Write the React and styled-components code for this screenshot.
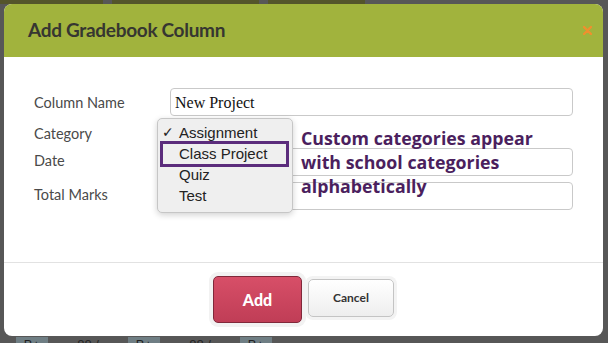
import React from "react";
import styled, { createGlobalStyle } from "styled-components";

const GlobalStyle = createGlobalStyle`
  html, body {
    margin: 0;
    padding: 0;
    background: #575757;
  }
  body {
    font-family: "Lato", "Liberation Sans", sans-serif;
  }
`;

const Page = styled.div`
  width: 608px;
  height: 343px;
  overflow: hidden;
  background: #575757;
  display: flex;
  flex-direction: column;
`;

const TopStrip = styled.div`
  height: 4px;
  display: flex;
  gap: 9px;
  flex-shrink: 0;
`;

const TopBar = styled.div`
  width: ${(p) => p.w}px;
  background: #54552b;
`;

const Modal = styled.div`
  width: 599px;
  height: 332px;
  margin-left: 4px;
  flex-shrink: 0;
  background: #fff;
  border-radius: 8px;
  overflow: hidden;
  display: flex;
  flex-direction: column;
`;

const Header = styled.div`
  height: 53px;
  background: #a1b33d;
  display: flex;
  align-items: center;
  justify-content: space-between;
  padding: 0 10px 0 24px;
  flex-shrink: 0;
`;

const Title = styled.h1`
  margin: 0 0 3px;
  font-family: "Lato", "Liberation Sans", sans-serif;
  font-size: 19px;
  font-weight: 700;
  color: #363631;
  letter-spacing: -0.3px;
`;

const Close = styled.button`
  border: 0;
  background: none;
  padding: 0;
  width: 12px;
  height: 12px;
  display: flex;
  align-items: center;
  justify-content: center;
`;

const Body = styled.div`
  flex: 1;
  padding: 31px 30px 0 30px;
  border-bottom: 1px solid #e2e2e2;
`;

const Form = styled.div`
  display: grid;
  grid-template-columns: 136px 1fr;
  grid-template-rows: 28px 20px 28px 28px;
  row-gap: 6px;
  align-items: center;
`;

const Label = styled.label`
  font-size: 14.5px;
  color: #4a4a4a;
  margin-top: ${(p) => p.shift || 0}px;
`;

const Field = styled.div`
  position: relative;
  height: 100%;
`;

const TextInput = styled.input`
  box-sizing: border-box;
  width: 100%;
  height: 100%;
  border: 1px solid #c9c9c9;
  border-radius: 4px;
  padding: 2px 4px 0;
  font-family: "Liberation Serif", serif;
  font-size: 16px;
  color: #111;
  background: #fff;
  outline: none;
`;

const SelectStub = styled.div`
  width: 110px;
  height: 100%;
  border: 1px solid #c9c9c9;
  border-radius: 4px;
  box-sizing: border-box;
`;

const Menu = styled.ul`
  position: absolute;
  left: -13px;
  top: -4px;
  width: 136px;
  box-sizing: border-box;
  margin: 0;
  padding: 3px 0 6px;
  list-style: none;
  background: #efefef;
  border: 1px solid #c6c6c6;
  border-radius: 5px;
  box-shadow: 0 2px 6px rgba(0, 0, 0, 0.18);
  z-index: 2;
`;

const MenuItem = styled.li`
  position: relative;
  height: 21px;
  line-height: 21px;
  padding-left: 21px;
  font-family: "Liberation Sans", Arial, sans-serif;
  font-size: 15px;
  color: #222;

  ${(p) =>
    p.outlined &&
    `
    &::after {
      content: "";
      position: absolute;
      left: 2px;
      top: -2px;
      width: 129px;
      height: 26px;
      box-sizing: border-box;
      border: 3px solid #5b2c7c;
    }
  `}
`;

const Check = styled.span`
  position: absolute;
  left: 4px;
  top: 0;
  font-size: 14px;
  font-family: "DejaVu Sans", sans-serif;
`;

const Note = styled.p`
  position: absolute;
  left: 131px;
  top: 4px;
  margin: 0;
  width: 270px;
  font-family: "Open Sans", sans-serif;
  font-weight: 700;
  font-size: 17.8px;
  line-height: 24px;
  color: #4b1f5e;
  z-index: 3;
`;

const Footer = styled.div`
  height: 73px;
  display: flex;
  align-items: center;
  justify-content: center;
  gap: 6px;
  flex-shrink: 0;
`;

const AddButton = styled.button`
  width: 89px;
  height: 47px;
  border: 1px solid #80283a;
  border-radius: 5px;
  background: linear-gradient(#d74f68, #c03d56);
  box-shadow: 0 0 0 4px #f2f2f2;
  color: #fff;
  font-family: "Lato", "Liberation Sans", sans-serif;
  font-weight: 900;
  font-size: 16px;
`;

const CancelButton = styled.button`
  width: 86px;
  height: 38px;
  border: 1px solid #c4c4c4;
  border-radius: 5px;
  background: linear-gradient(#ffffff, #eeeeee);
  box-shadow: 0 0 0 3px #f3f3f3;
  color: #333;
  font-family: "Lato", "Liberation Sans", sans-serif;
  font-weight: 700;
  font-size: 12px;
  margin-bottom: 4px;
`;

const BackRow = styled.div`
  display: flex;
  align-items: flex-start;
  padding-left: 16px;
  margin-top: 1px;
  height: 20px;
  font-family: "Liberation Sans", sans-serif;
  font-size: 13px;
  color: #222;
`;

const BackCell = styled.div`
  width: ${(p) => p.w}px;
  background: ${(p) => (p.grade ? "#6f7e84" : "transparent")};
  text-align: center;
  line-height: 16px;
  margin-right: ${(p) => p.mr || 0}px;
`;

const categories = ["Assignment", "Class Project", "Quiz", "Test"];

export default function App() {
  return (
    <Page>
      <GlobalStyle />
      <TopStrip>
        <TopBar w={103} />
        <TopBar w={147} />
        <TopBar w={97} />
      </TopStrip>
      <Modal>
        <Header>
          <Title>Add Gradebook Column</Title>
          <Close aria-label="Close">
            <svg width="9" height="9" viewBox="0 0 9 9">
              <path d="M1 1L8 8M8 1L1 8" stroke="#ef902e" strokeWidth="2.4" strokeLinecap="round" />
            </svg>
          </Close>
        </Header>
        <Body>
          <Form>
            <Label>Column Name</Label>
            <Field>
              <TextInput defaultValue="New Project" />
            </Field>
            <Label shift={2}>Category</Label>
            <Field>
              <SelectStub />
              <Menu>
                {categories.map((c, i) => (
                  <MenuItem key={c} outlined={c === "Class Project"}>
                    {i === 0 && <Check>✓</Check>}
                    {c}
                  </MenuItem>
                ))}
              </Menu>
              <Note>
                Custom categories appear with school categories alphabetically
              </Note>
            </Field>
            <Label shift={-3}>Date</Label>
            <Field>
              <TextInput />
            </Field>
            <Label shift={-3}>Total Marks</Label>
            <Field>
              <TextInput />
            </Field>
          </Form>
        </Body>
        <Footer>
          <AddButton>Add</AddButton>
          <CancelButton>Cancel</CancelButton>
        </Footer>
      </Modal>
      <BackRow>
        <BackCell w={32} grade mr={18}>B+</BackCell>
        <BackCell w={44} mr={18}>88 / 100</BackCell>
        <BackCell w={32} grade mr={18}>B+</BackCell>
        <BackCell w={44} mr={18}>88 / 100</BackCell>
        <BackCell w={32} grade>B+</BackCell>
      </BackRow>
    </Page>
  );
}
